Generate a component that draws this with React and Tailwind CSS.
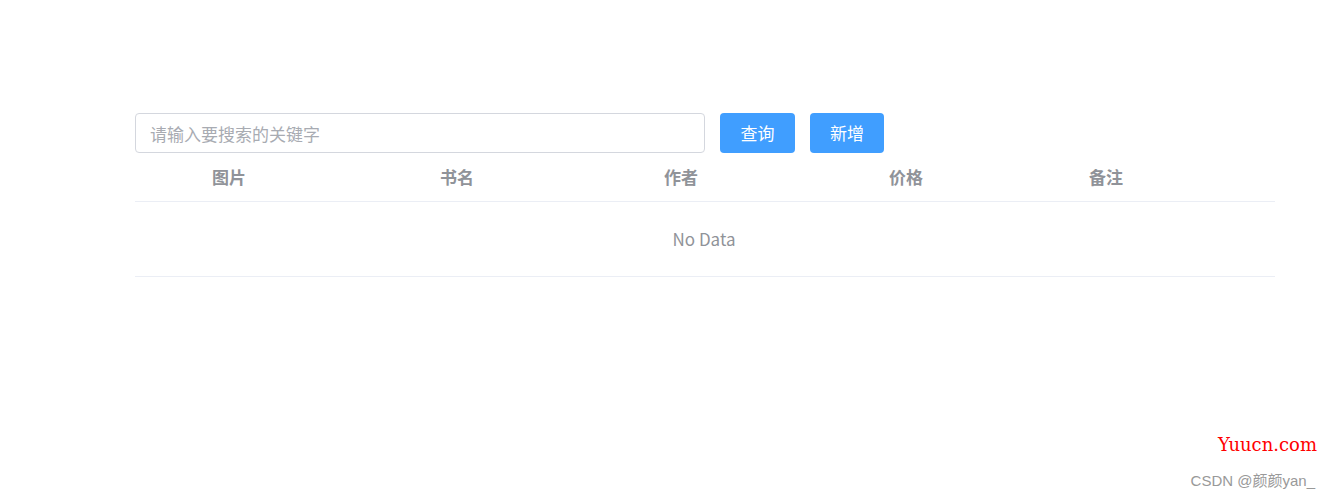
import React, { useState } from 'react';

const columns = [
  { label: '图片', width: 'w-[228px]' },
  { label: '书名', width: 'w-[224px]' },
  { label: '作者', width: 'w-[225px]' },
  { label: '价格', width: 'w-[200px]' },
  { label: '备注', width: 'flex-1' },
];

const App = () => {
  const [keyword, setKeyword] = useState('');
  const [books] = useState([]);

  return (
    <div
      className="relative h-[498px] w-full bg-white"
      style={{ fontFamily: '"Noto Sans CJK SC", "Liberation Sans", sans-serif' }}
    >
      <div className="pt-[113px] pl-[135px] w-[1275px]">
        <div className="flex items-center">
          <input
            value={keyword}
            onChange={(e) => setKeyword(e.target.value)}
            placeholder="请输入要搜索的关键字"
            className="w-[570px] h-[40px] rounded border border-[#d4d7de] px-[14px] text-[17px] text-[#606266] placeholder-[#a8abb2] outline-none"
          />
          <button className="ml-[15px] w-[75px] h-[40px] rounded bg-[#409eff] text-white text-[17px]">
            查询
          </button>
          <button className="ml-[15px] w-[74px] h-[40px] rounded bg-[#409eff] text-white text-[17px]">
            新增
          </button>
        </div>

        <div className="flex h-[49px] items-center border-b border-[#ebeef5] pl-[77px] text-[17px] font-bold text-[#909399]">
          {columns.map((col) => (
            <div key={col.label} className={col.width}>
              {col.label}
            </div>
          ))}
        </div>

        {books.length === 0 && (
          <div className="flex h-[75px] items-center justify-center border-b border-[#ebeef5] pr-[2px] text-[17px] text-[#909399]">
            No Data
          </div>
        )}
      </div>

      <div
        className="absolute right-[13px] top-[431px] text-[18px] text-[#ff0000]"
        style={{ fontFamily: '"DejaVu Serif", "Liberation Serif", serif' }}
      >
        Yuucn.com
      </div>
      <div
        className="absolute right-[15px] top-[470px] text-[15px] text-[#999999]"
        style={{ fontFamily: '"Liberation Sans", "Noto Sans CJK SC", sans-serif' }}
      >
        CSDN @颜颜yan_
      </div>
    </div>
  );
};

export default App;
